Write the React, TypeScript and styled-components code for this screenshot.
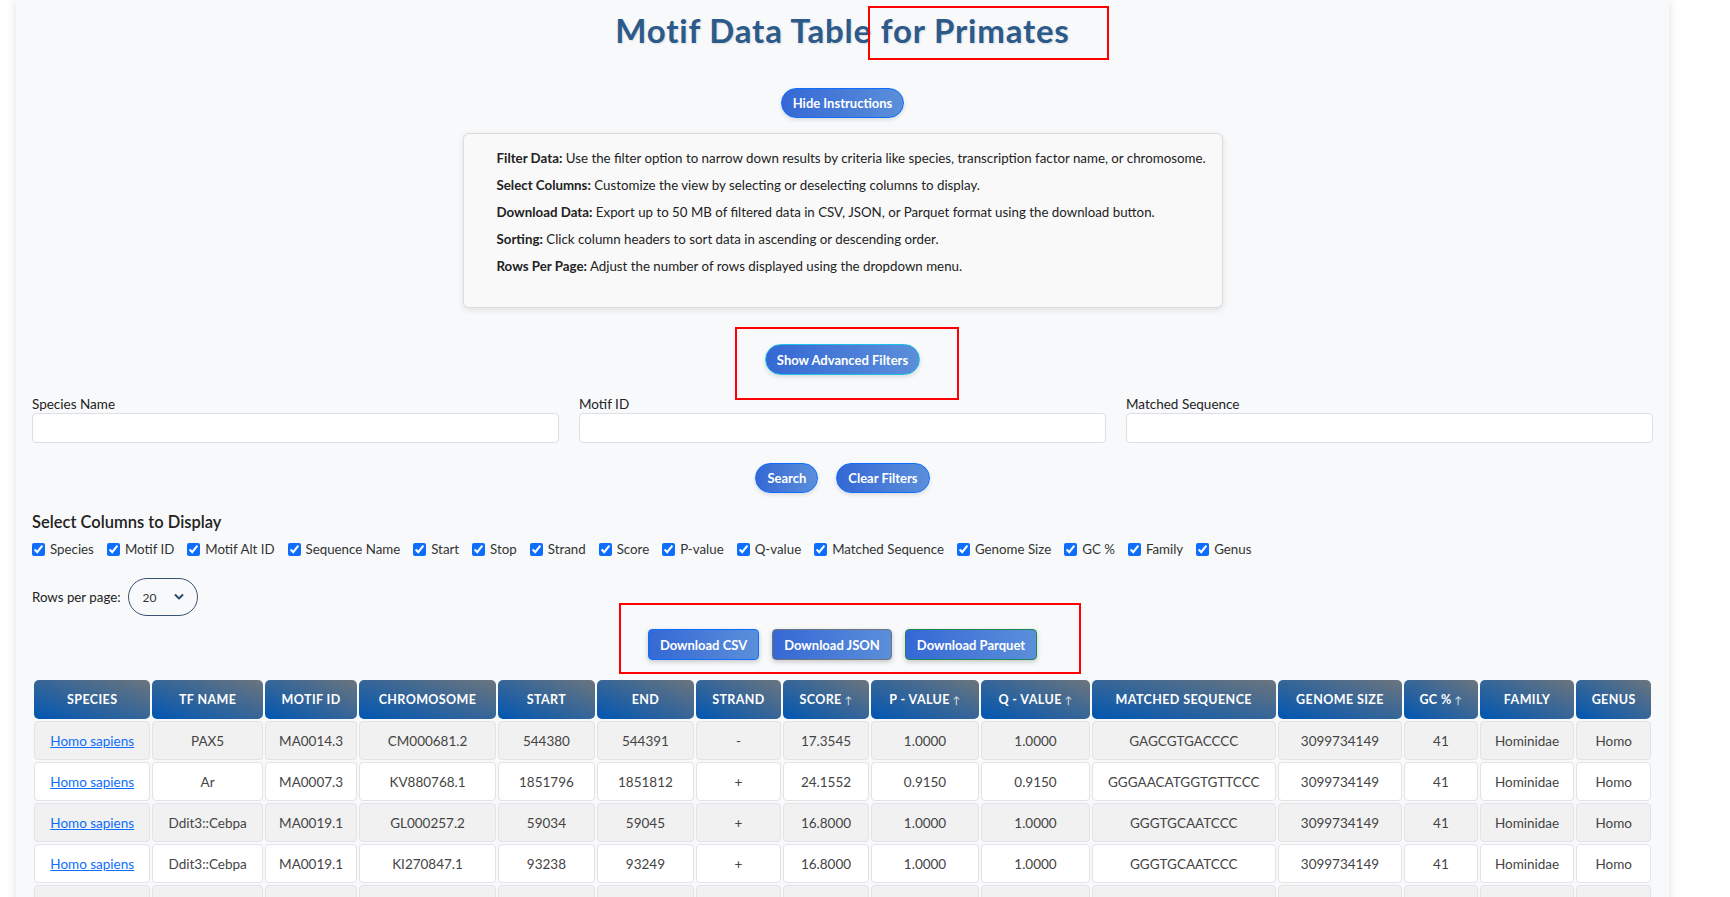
import React from "react";
import styled, { createGlobalStyle } from "styled-components";

const GlobalStyle = createGlobalStyle`
  html, body { margin: 0; padding: 0; background: #ffffff; }
  body { font-family: Lato, "Liberation Sans", sans-serif; color: #333; }
  * { box-sizing: border-box; }
`;

const Page = styled.div`
  padding-left: 16px;
  width: 1669px;
`;

const Container = styled.div`
  position: relative;
  background: #f8f9fa;
  box-shadow: 0 0 10px rgba(0, 0, 0, 0.12);
  padding: 11px 16px 40px;
  display: flex;
  flex-direction: column;
`;

const Title = styled.h1`
  margin: 0;
  font-size: 33px;
  line-height: 38px;
  font-weight: 700;
  letter-spacing: 0.8px;
  color: #2c5a8a;
  text-align: center;
  text-shadow: 1px 1px 2px rgba(0, 0, 0, 0.12);
`;

const Center = styled.div<{ $mt: number; $gap?: number }>`
  display: flex;
  justify-content: center;
  gap: ${(p) => p.$gap ?? 0}px;
  margin-top: ${(p) => p.$mt}px;
`;

const PillButton = styled.button<{ $border?: string; $h?: number }>`
  height: ${(p) => p.$h ?? 30}px;
  padding: 0 11px;
  border-radius: 16px;
  border: 1px solid ${(p) => p.$border ?? "#0d6efd"};
  background: linear-gradient(to right, #3568d4, #5b8fda);
  color: #fff;
  font-family: Lato, "Liberation Sans", sans-serif;
  font-weight: 700;
  font-size: 13px;
  box-shadow: 0 2px 4px rgba(0, 0, 0, 0.12);
  cursor: pointer;
`;

const InstructionBox = styled.div`
  width: 760px;
  margin: 15px auto 0;
  padding: 11px 20px 27px 33px;
  background: #f9f9f9;
  border: 1px solid #dcdcdc;
  border-radius: 6px;
  box-shadow: 0 2px 6px rgba(0, 0, 0, 0.1);
`;

const InstructionLine = styled.p`
  margin: 0;
  font-size: 13.3px;
  line-height: 27px;
  color: #222;
  white-space: nowrap;
  b { font-weight: 700; }
`;

const FilterGrid = styled.div`
  display: grid;
  grid-template-columns: repeat(3, 1fr);
  gap: 20px;
  margin-top: 21px;
`;

const Field = styled.label`
  display: flex;
  flex-direction: column;
  font-size: 13.5px;
  line-height: 17px;
  color: #222;
`;

const TextInput = styled.input`
  height: 30px;
  margin-top: 0;
  border: 1px solid #dcdfe4;
  border-radius: 4px;
  background: #fff;
  font-family: inherit;
`;

const SectionHeading = styled.h3`
  margin: 19px 0 0;
  font-size: 16.5px;
  line-height: 20px;
  font-weight: 600;
  color: #222;
`;

const CheckRow = styled.div`
  display: flex;
  flex-wrap: wrap;
  gap: 13px;
  margin-top: 8px;
`;

const CheckItem = styled.label`
  display: flex;
  align-items: center;
  gap: 5px;
  font-size: 13.3px;
  line-height: 18px;
  color: #333;
  input {
    margin: 0;
    width: 13px;
    height: 13px;
    accent-color: #0d6efd;
  }
`;

const RowsPer = styled.div`
  display: flex;
  align-items: center;
  gap: 7px;
  margin-top: 20px;
  font-size: 13.3px;
  color: #222;
`;

const SelectWrap = styled.div`
  position: relative;
  width: 70px;
  height: 38px;
`;

const Select = styled.select`
  appearance: none;
  -webkit-appearance: none;
  width: 100%;
  height: 100%;
  border: 1px solid #3a5276;
  border-radius: 19px;
  background: transparent;
  padding-left: 14px;
  font-family: inherit;
  font-size: 12px;
  color: #333;
`;

const Chevron = styled.svg`
  position: absolute;
  right: 14px;
  top: 15px;
  pointer-events: none;
`;

const DownloadButton = styled.button<{ $border: string }>`
  height: 31px;
  padding: 0 11px;
  border-radius: 4px;
  border: 1px solid ${(p) => p.$border};
  background: linear-gradient(to right, #3568d4, #5b8fda);
  color: #fff;
  font-family: Lato, "Liberation Sans", sans-serif;
  font-weight: 700;
  font-size: 13px;
  box-shadow: 0 2px 5px rgba(0, 0, 0, 0.2);
  cursor: pointer;
`;

const Table = styled.table`
  margin-top: 18px;
  width: 100%;
  table-layout: fixed;
  border-collapse: separate;
  border-spacing: 2px;
`;

const Col = styled.col<{ $pct: number }>`
  width: ${(p) => p.$pct}%;
`;

const Th = styled.th`
  height: 39px;
  padding: 0 4px;
  background: linear-gradient(to top right, #0056b3, #6c757d);
  color: #fff;
  font-size: 12.5px;
  font-weight: 700;
  letter-spacing: 0.4px;
  text-transform: uppercase;
  border-radius: 5px;
  white-space: nowrap;
  span { font-size: 10px; font-weight: 400; opacity: 0.85; }
`;

const Tr = styled.tr<{ $odd: boolean }>`
  td { background: ${(p) => (p.$odd ? "#f1f1f1" : "#ffffff")}; }
`;

const Td = styled.td`
  height: 39px;
  padding: 0 4px;
  text-align: center;
  font-size: 13.5px;
  color: #444;
  border: 1px solid #e1e3e6;
  border-radius: 4px;
  white-space: nowrap;
  a { color: #0d6efd; text-decoration: underline; }
`;

const Annotation = styled.div<{ $l: number; $t: number; $w: number; $h: number }>`
  position: absolute;
  left: ${(p) => p.$l}px;
  top: ${(p) => p.$t}px;
  width: ${(p) => p.$w}px;
  height: ${(p) => p.$h}px;
  border: 2px solid #ff0000;
  pointer-events: none;
`;

const columns = [
  { label: "Species", w: 117 },
  { label: "TF Name", w: 111 },
  { label: "Motif ID", w: 93 },
  { label: "Chromosome", w: 137 },
  { label: "Start", w: 98 },
  { label: "End", w: 97 },
  { label: "Strand", w: 86 },
  { label: "Score", w: 86, sort: true },
  { label: "P - Value", w: 109, sort: true },
  { label: "Q - Value", w: 109, sort: true },
  { label: "Matched Sequence", w: 185 },
  { label: "Genome Size", w: 125 },
  { label: "GC %", w: 74, sort: true },
  { label: "Family", w: 95 },
  { label: "Genus", w: 75 },
];
const totalW = columns.reduce((s, c) => s + c.w, 0);

const rows = [
  ["PAX5", "MA0014.3", "CM000681.2", "544380", "544391", "-", "17.3545", "1.0000", "1.0000", "GAGCGTGACCCC"],
  ["Ar", "MA0007.3", "KV880768.1", "1851796", "1851812", "+", "24.1552", "0.9150", "0.9150", "GGGAACATGGTGTTCCC"],
  ["Ddit3::Cebpa", "MA0019.1", "GL000257.2", "59034", "59045", "+", "16.8000", "1.0000", "1.0000", "GGGTGCAATCCC"],
  ["Ddit3::Cebpa", "MA0019.1", "KI270847.1", "93238", "93249", "+", "16.8000", "1.0000", "1.0000", "GGGTGCAATCCC"],
  ["Ddit3::Cebpa", "MA0019.1", "KI270849.1", "42811", "42822", "+", "16.8000", "1.0000", "1.0000", "GGGTGCAATCCC"],
];

const colOptions = [
  "Species", "Motif ID", "Motif Alt ID", "Sequence Name", "Start", "Stop", "Strand", "Score",
  "P-value", "Q-value", "Matched Sequence", "Genome Size", "GC %", "Family", "Genus",
];

const instructions: [string, string][] = [
  ["Filter Data:", "Use the filter option to narrow down results by criteria like species, transcription factor name, or chromosome."],
  ["Select Columns:", "Customize the view by selecting or deselecting columns to display."],
  ["Download Data:", "Export up to 50 MB of filtered data in CSV, JSON, or Parquet format using the download button."],
  ["Sorting:", "Click column headers to sort data in ascending or descending order."],
  ["Rows Per Page:", "Adjust the number of rows displayed using the dropdown menu."],
];

export default function App() {
  return (
    <Page>
      <GlobalStyle />
      <Container>
        <Title>Motif Data Table for Primates</Title>
        <Center $mt={39}>
          <PillButton>Hide Instructions</PillButton>
        </Center>
        <InstructionBox>
          {instructions.map(([b, t]) => (
            <InstructionLine key={b}>
              <b>{b}</b> {t}
            </InstructionLine>
          ))}
        </InstructionBox>
        <Center $mt={36}>
          <PillButton $border="#1fc0e8" $h={31}>Show Advanced Filters</PillButton>
        </Center>
        <FilterGrid>
          <Field>Species Name<TextInput /></Field>
          <Field>Motif ID<TextInput /></Field>
          <Field>Matched Sequence<TextInput /></Field>
        </FilterGrid>
        <Center $mt={20} $gap={18}>
          <PillButton>Search</PillButton>
          <PillButton>Clear Filters</PillButton>
        </Center>
        <SectionHeading>Select Columns to Display</SectionHeading>
        <CheckRow>
          {colOptions.map((c) => (
            <CheckItem key={c}>
              <input type="checkbox" defaultChecked />
              {c}
            </CheckItem>
          ))}
        </CheckRow>
        <RowsPer>
          Rows per page:
          <SelectWrap>
            <Select defaultValue="20">
              <option>10</option>
              <option>20</option>
              <option>50</option>
            </Select>
            <Chevron width="10" height="8" viewBox="0 0 10 8">
              <path d="M1.5 2 L5 5.5 L8.5 2" fill="none" stroke="#2c4a6e" strokeWidth="2" strokeLinecap="round" strokeLinejoin="round" />
            </Chevron>
          </SelectWrap>
        </RowsPer>
        <Center $mt={13} $gap={13}>
          <DownloadButton $border="#0d6efd">Download CSV</DownloadButton>
          <DownloadButton $border="#6c757d">Download JSON</DownloadButton>
          <DownloadButton $border="#198754">Download Parquet</DownloadButton>
        </Center>
        <Table>
          <colgroup>
            {columns.map((c) => (
              <Col key={c.label} $pct={(c.w / totalW) * 100} />
            ))}
          </colgroup>
          <thead>
            <tr>
              {columns.map((c) => (
                <Th key={c.label}>
                  {c.label}
                  {c.sort && <span> ↑</span>}
                </Th>
              ))}
            </tr>
          </thead>
          <tbody>
            {rows.map((r, i) => (
              <Tr key={i} $odd={i % 2 === 0}>
                <Td><a href="#">Homo sapiens</a></Td>
                {r.map((v, j) => (
                  <Td key={j}>{v}</Td>
                ))}
                <Td>3099734149</Td>
                <Td>41</Td>
                <Td>Hominidae</Td>
                <Td>Homo</Td>
              </Tr>
            ))}
          </tbody>
        </Table>
        <Annotation $l={852} $t={6} $w={241} $h={54} />
        <Annotation $l={719} $t={327} $w={224} $h={73} />
        <Annotation $l={603} $t={603} $w={462} $h={71} />
      </Container>
    </Page>
  );
}
